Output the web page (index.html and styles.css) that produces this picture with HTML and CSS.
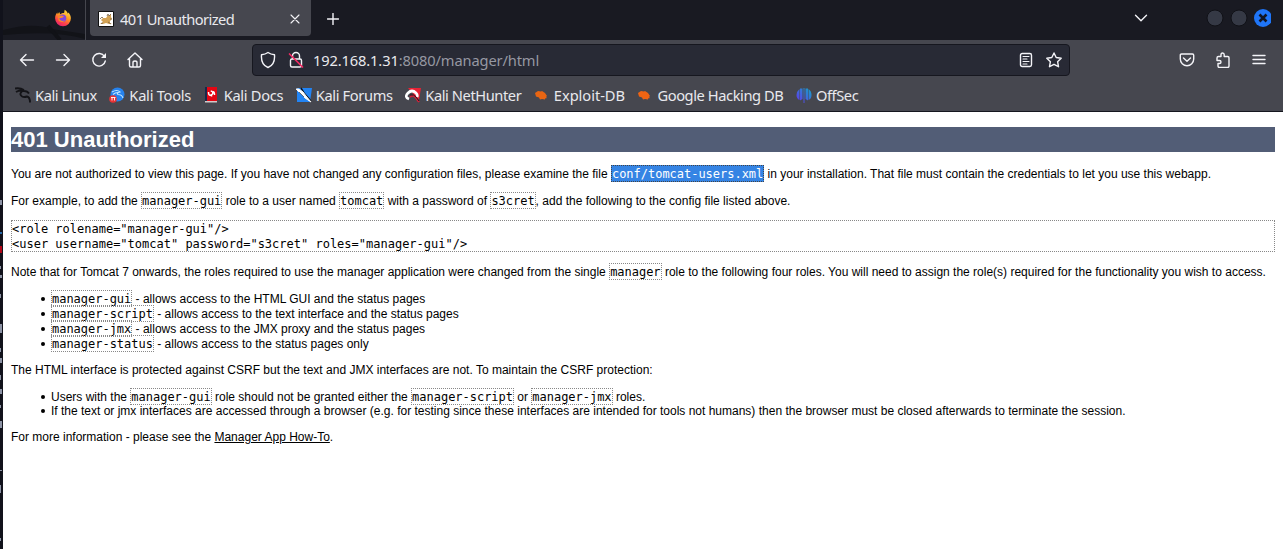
FILE: index.html
```html
<!DOCTYPE html>
<html lang="en">
<head>
<meta charset="utf-8">
<title>401 Unauthorized</title>
<link rel="stylesheet" href="styles.css">
</head>
<body>
<div class="desktop-edge">
  <svg width="3" height="549" viewBox="0 0 3 549"><path d="M0 200h2v5H0zM0 266h1v3H0zM0 275h2v3H0zM0 294h1v4H0zM0 324h2v9H0zM0 348h1v4H0zM0 358h2v5H0zM0 375h1v5H0zM0 389h2v5H0zM0 405h1v3H0zM0 421h2v7H0zM0 470h2v1H0zM0 485h1v8H0zM0 538h1v3H0z" fill="#8d93a5"/><path d="M0 232h2v2H0z" fill="#276aa9"/><path d="M0 246h2v7H0z" fill="#b20719"/></svg>
</div>
<div class="browser">
  <header class="tabs">
    <div class="pinned">
      <svg class="wall" width="82" height="40" viewBox="0 0 82 40"><path d="M0 30Q30 22 49 29L82 34V39Q52 30 0 35Z" fill="#121318"/><path d="M45 26l12 14" stroke="#111217" stroke-width="4"/></svg>
      <svg class="fox" width="18" height="18" viewBox="0 0 18 18"><defs><linearGradient id="fire" x1=".8" y1="0" x2=".3" y2="1"><stop offset="0" stop-color="#ffe34a"/><stop offset=".45" stop-color="#ff961f"/><stop offset=".75" stop-color="#ff414b"/><stop offset="1" stop-color="#e42170"/></linearGradient></defs><path d="M10.7.8c2 1.2 2.8 2.7 3.1 4l.5-1.3C16 5.200 16.900 7 16.900 9.300a7.900 7.900 0 0 1-15.800 0C1.100 6.500 2.200 4.600 3.300 3.500l.5 1.700L5.200 3l1 2.300c1.200-1 3-1.500 3.900-1.300Z" fill="url(#fire)"/><circle cx="8.600" cy="9.200" r="3.700" fill="#8148dc"/><path d="M4 7.500l4-1 2 1.300-2 1-2.800.5c.8 2.500 3.500 3.500 5.600 1.900-1 2.200-4.800 2.600-6.300.1Z" fill="#ff8a25"/></svg>
    </div>
    <div class="tab">
      <svg width="16" height="16" viewBox="0 0 16 16"><path d="M.5.5h15v15H.5z" fill="#fff" stroke="#111"/><path d="M3 9l2-2 3 0 2-3 1 1 2-2v3l1 2-2 2 0 2 2 1-3 0-3-1-3 1H2l3-2-1-1Z" fill="#d2a254"/><path d="M2 8l2-2 1 1M9 5l1-2 1 2 2-2M5 12l-2 .5M10 11l3 2M13 7v2" fill="none" stroke="#776044" stroke-width=".8"/></svg>
      <span class="tab-title">401 Unauthorized</span>
      <svg class="line close" width="10" height="10" viewBox="0 0 10 10"><path d="M1 1l8 8M9 1L1 9" stroke-width="1.100"/></svg>
    </div>
    <svg class="line plus" width="12" height="12" viewBox="0 0 12 12"><path d="M6 .5v11M.5 6h11"/></svg>
    <div class="window-controls">
      <svg class="line chevron" width="14" height="8" viewBox="0 0 14 8"><path d="M1.500 1.200L7 6.700l5.500-5.500"/></svg>
      <svg width="66" height="20" viewBox="0 0 66 20"><circle cx="10" cy="10" r="8" fill="#353945" stroke="#101117"/><circle cx="34" cy="10" r="8" fill="#353945" stroke="#101117"/><circle cx="58" cy="10" r="9" fill="#1f75f7"/><path d="M54.500 6.500l7 7M61.500 6.500l-7 7" stroke="#111522" stroke-width="2.600"/></svg>
    </div>
  </header>
  <nav class="toolbar">
    <div class="nav-buttons">
      <svg class="line" width="16" height="16" viewBox="0 0 16 16"><path d="M14.500 8H1.500M7 2.500L1.500 8 7 13.500"/></svg>
      <svg class="line" width="16" height="16" viewBox="0 0 16 16"><path d="M1.500 8h13M9 2.500L14.500 8 9 13.500"/></svg>
      <svg class="line" width="16" height="16" viewBox="0 0 16 16"><path d="M13.500 4.500A6.300 6.300 0 1 0 14.300 9"/><path d="M15 1v5h-5Z" fill="#f4f4f8" stroke="none"/></svg>
      <svg class="line" width="16" height="16" viewBox="0 0 16 16"><path d="M1 7.500L8 1l7 6.500M2.500 6.500v7q0 1.500 1.500 1.500h8q1.500 0 1.500-1.500v-7M6 15v-4.500q0-1.500 2-1.500t2 1.500V15"/></svg>
    </div>
    <div class="address">
      <svg class="line" width="16" height="18" viewBox="0 0 16 18"><path d="M8 1.500c2 1.400 4 2 6.500 2.300C15 10 13 14.500 8 16.500 3 14.500 1 10 1.500 3.800 4 3.500 6 2.900 8 1.500Z"/></svg>
      <svg class="line lock" width="16" height="18" viewBox="0 0 16 18"><rect x="2.500" y="8" width="11" height="8" rx="1.500"/><path d="M4.500 7.500V5a3.500 3.500 0 0 1 7 0v2.500"/><path d="M1.500 3l13 13" stroke="#f32a64" stroke-width="1.700"/></svg>
      <span class="url">192.168.1.31<span class="path">:8080/manager/html</span></span>
      <svg class="line reader" width="14" height="16" viewBox="0 0 14 16"><rect x="1.500" y="1.500" width="11" height="13" rx="1.700"/><path d="M4 4.500h6M4 7h4M4 9.500h6M4 12h4" stroke-width="1.100"/></svg>
      <svg class="line" width="16" height="16" viewBox="0 0 16 16"><path d="M8 1l2.200 4.500 5 .7-3.600 3.500.9 5L8 12.300l-4.500 2.400.9-5L.8 6.200l5-.7Z"/></svg>
    </div>
    <div class="actions">
      <svg class="line" width="16" height="16" viewBox="0 0 16 16"><path d="M2.500 2h11q1.200 0 1.200 1.200V7a6.700 6.700 0 0 1-13.400 0V3.200Q1.300 2 2.500 2ZM4.500 6L8 9.300 11.500 6"/></svg>
      <svg class="line" width="16" height="16" viewBox="0 0 16 16"><path d="M3.500 4.500H6V2.800q0-1.800 1.600-1.800t1.600 1.800v1.700h3.500q1.300 0 1.300 1.300v8.200q0 1.500-1.500 1.500h-8Q3 15.500 3 14v-2.500h1.500Q6 11.500 6 10T4.500 8.500H2V6q0-1.500 1.500-1.500Z"/></svg>
      <svg class="line" width="16" height="16" viewBox="0 0 16 16"><path d="M2 3.500h12M2 7.500h12M2 11.500h12"/></svg>
    </div>
  </nav>
  <div class="bookmarks">
    <span class="bookmark"><svg width="16" height="16" viewBox="0 0 16 16"><path d="M0 1.500q5-1 9 1.500M1 5q4-2.500 8-1M9 3Q4 6 6 8.500t6 1q3 .5 3 6M8 4q4-.5 6 2.500" fill="none" stroke="#141418" stroke-width="1.900"/></svg>Kali Linux</span>
    <span class="bookmark tools"><svg width="16" height="16" viewBox="0 0 16 16"><circle cx="8.500" cy="7.500" r="7" fill="#2682ed"/><path d="M3 5q5-3 8 0-4 1-2 2.500 4 0 5 3.500M4 7.500q2-2 5-2" fill="none" stroke="#bde4ff" stroke-width="1.100"/><circle cx="4" cy="12" r="3.800" fill="#e83235"/><path d="M2 10.500h4.500M3 10.500v3M5.500 10.500v3" stroke="#fff" stroke-width=".9"/></svg>Kali Tools</span>
    <span class="bookmark docs"><svg width="16" height="16" viewBox="0 0 16 16"><path d="M1 0h12v14H1z" fill="#e30613"/><path d="M1 0h2v15H1z" fill="#17294c"/><path d="M1 14h12v1.500H1z" fill="#d4c9c9"/><path d="M4.500 5Q4.500 9 7 8t1.500-3Q10.500 4 10.500 8M7.500 3.500v1.500M7.500 8v1.500" fill="none" stroke="#fff" stroke-width="1.500"/></svg>Kali Docs</span>
    <span class="bookmark forums"><svg width="16" height="16" viewBox="0 0 16 16"><path d="M1 1h15l-2 14H1Z" fill="#2284f4"/><path d="M5 1l3 5 7 8" fill="none" stroke="#111722" stroke-width="1.500"/><path d="M0 2l3 0 4 3 3 4 5 6-6-4-5-5Z" fill="#fff" stroke="#f7f7f7"/><path d="M3 5l5 5" stroke="#263344" stroke-width=".7"/></svg>Kali Forums</span>
    <span class="bookmark"><svg width="16" height="16" viewBox="0 0 16 16"><path d="M3 1h13l-2 12-5-5Z" fill="#e82235"/><path d="M4 12Q-1 10 3 6t8 0q2 2 1 4" fill="none" stroke="#fff" stroke-width="2.600"/><path d="M5 10q3-3 6 1l3 4" fill="none" stroke="#d91f38" stroke-width="2"/><path d="M5 8q4-1 6 2l3 4" fill="none" stroke="#24151d"/></svg>Kali NetHunter</span>
    <span class="bookmark exploit"><svg width="16" height="16" viewBox="0 0 16 16"><path d="M1 6l3-2 3 .5L8 4l3 2 2 3-1 1 1 1-2 .5v1L8 12l-2 .5-1-2-3-1Z" fill="#e86512"/></svg>Exploit-DB</span>
    <span class="bookmark"><svg width="16" height="16" viewBox="0 0 16 16"><path d="M1 6l3-2 3 .5L8 4l3 2 2 3-1 1 1 1-2 .5v1L8 12l-2 .5-1-2-3-1Z" fill="#ef6413"/></svg>Google Hacking DB</span>
    <span class="bookmark"><svg width="16" height="16" viewBox="0 0 16 16"><defs><linearGradient id="off" x1="0" y1="1" x2="1" y2="0"><stop stop-color="#6730ed"/><stop offset="1" stop-color="#12a5c8"/></linearGradient></defs><path d="M3.500 2v11Q.5 11.500.5 8t3-6ZM4 1.500h2.500V12L4 13.500ZM9.500 1.500H12v12L9.500 12ZM12.500 2q3 2 3 6t-3 5ZM7.500 1h1v15h-1Z" fill="url(#off)"/></svg>OffSec</span>
  </div>
  <main class="page">
    <h1>401 Unauthorized</h1>
    <p>You are not authorized to view this page. If you have not changed any configuration files, please examine the file <code class="selected">conf/tomcat-users.xml</code> in your installation. That file must contain the credentials to let you use this webapp.</p>
    <p>For example, to add the <code>manager-gui</code> role to a user named <code>tomcat</code> with a password of <code>s3cret</code>, add the following to the config file listed above.</p>
<pre>&lt;role rolename="manager-gui"/&gt;
&lt;user username="tomcat" password="s3cret" roles="manager-gui"/&gt;</pre>
    <p>Note that for Tomcat 7 onwards, the roles required to use the manager application were changed from the single <code>manager</code> role to the following four roles. You will need to assign the role(s) required for the functionality you wish to access.</p>
    <ul>
      <li><code>manager-gui</code> - allows access to the HTML GUI and the status pages</li>
      <li><code>manager-script</code> - allows access to the text interface and the status pages</li>
      <li><code>manager-jmx</code> - allows access to the JMX proxy and the status pages</li>
      <li><code>manager-status</code> - allows access to the status pages only</li>
    </ul>
    <p class="plain">The HTML interface is protected against CSRF but the text and JMX interfaces are not. To maintain the CSRF protection:</p>
    <ul>
      <li>Users with the <code>manager-gui</code> role should not be granted either the <code>manager-script</code> or <code>manager-jmx</code> roles.</li>
      <li class="plain">If the text or jmx interfaces are accessed through a browser (e.g. for testing since these interfaces are intended for tools not humans) then the browser must be closed afterwards to terminate the session.</li>
    </ul>
    <p class="plain">For more information - please see the <a href="#">Manager App How-To</a>.</p>
  </main>
</div>
</body>
</html>
```
FILE: styles.css
```css
* { box-sizing: border-box; }
body { margin: 0; height: 549px; display: flex; overflow: hidden; background: #fff; }
svg { display: block; flex: none; }
.line { fill: none; stroke: #f4f4f8; stroke-width: 1.4; stroke-linecap: round; stroke-linejoin: round; }
.desktop-edge { width: 3px; height: 549px; background: #11121b; flex: none; }
.browser { width: 1280px; height: 549px; flex: none; font-family: "Noto Sans", sans-serif; font-size: 14.67px; color: #e9e9ed; }
.tabs { height: 40px; background: #191a22; display: flex; align-items: center; }
.pinned { width: 83px; height: 40px; border-right: 1px solid #45464e; display: grid; }
.wall, .fox { grid-area: 1 / 1; }
.fox { margin: 9px 0 0 51px; }
.tab { width: 221px; height: 36px; margin: -4px 0 0 4px; padding: 2px 11px 0 8px; border-radius: 0 0 4px 4px; background: #46474f; display: flex; align-items: center; gap: 6px; }
.tab-title { flex: 1; white-space: nowrap; letter-spacing: -.56px; margin-top: -1px; }
.plus { margin: -3px 0 0 16px; }
.window-controls { display: flex; align-items: center; margin: -5px 12px 0 auto; gap: 57px; }
.toolbar { height: 40px; background: #46474f; display: flex; align-items: center; }
.nav-buttons { display: flex; gap: 20px; margin-left: 16px; width: 233px; }
.address { width: 818px; height: 32px; display: flex; align-items: center; padding: 0 7px; border: 1px solid #16171f; border-radius: 4px; background: #282a35; }
.lock { margin-left: 12px; }
.url { flex: 1; margin-left: 9px; letter-spacing: -.13px; }
.path { color: #9698a2; }
.reader { margin-right: 13px; }
.actions { display: flex; gap: 20px; margin: 0 16px 0 auto; }
.bookmarks { height: 32px; background: #46474f; border-bottom: 1px solid #15161e; display: flex; align-items: center; gap: 12.5px; padding-left: 12px; }
.bookmark { height: 31px; display: flex; align-items: center; gap: 4px; padding-bottom: 1px; white-space: nowrap; line-height: 20px; letter-spacing: -.42px; }
.tools { letter-spacing: -.25px; }
.docs { letter-spacing: -.3px; }
.forums { letter-spacing: -.36px; }
.exploit { letter-spacing: -.05px; }
.page { display: flow-root; height: 437px; padding: 0 8px; background: #fff; color: #000; font: 12px "Liberation Sans", Arial, sans-serif; }
.page h1 { margin: 15px 0 14px; height: 25px; line-height: 25px; font-size: 22px; color: #fff; background: #525d76; }
.page p { margin: 12px 0; padding-top: 1px; height: 15px; line-height: 15px; white-space: nowrap; }
.page p.plain { padding: 0; height: 14px; line-height: 14px; }
.page code, .page pre { font: 12px "DejaVu Sans Mono", monospace; color: #000; border: 1px dotted #888; }
.page code { padding: 1px 0 0; letter-spacing: -.02px; }
.page code.selected { background: #3584e4; color: #fff; border-color: #444; }
.page pre { line-height: 15px; margin: 12px 0; height: 32px; padding-top: 1px; }
.page ul { list-style: none; margin: 12px 0; padding-left: 40px; line-height: 15px; }
.page li { white-space: nowrap; height: 15px; padding-top: 1px; }
.page li::before { content: ""; display: inline-block; width: 4px; height: 4px; margin: 0 6px 2px -10px; border-radius: 50%; background: #000; }
.page li.plain { padding: 0; height: 14px; line-height: 14px; }
.page a { color: #000; }
```
